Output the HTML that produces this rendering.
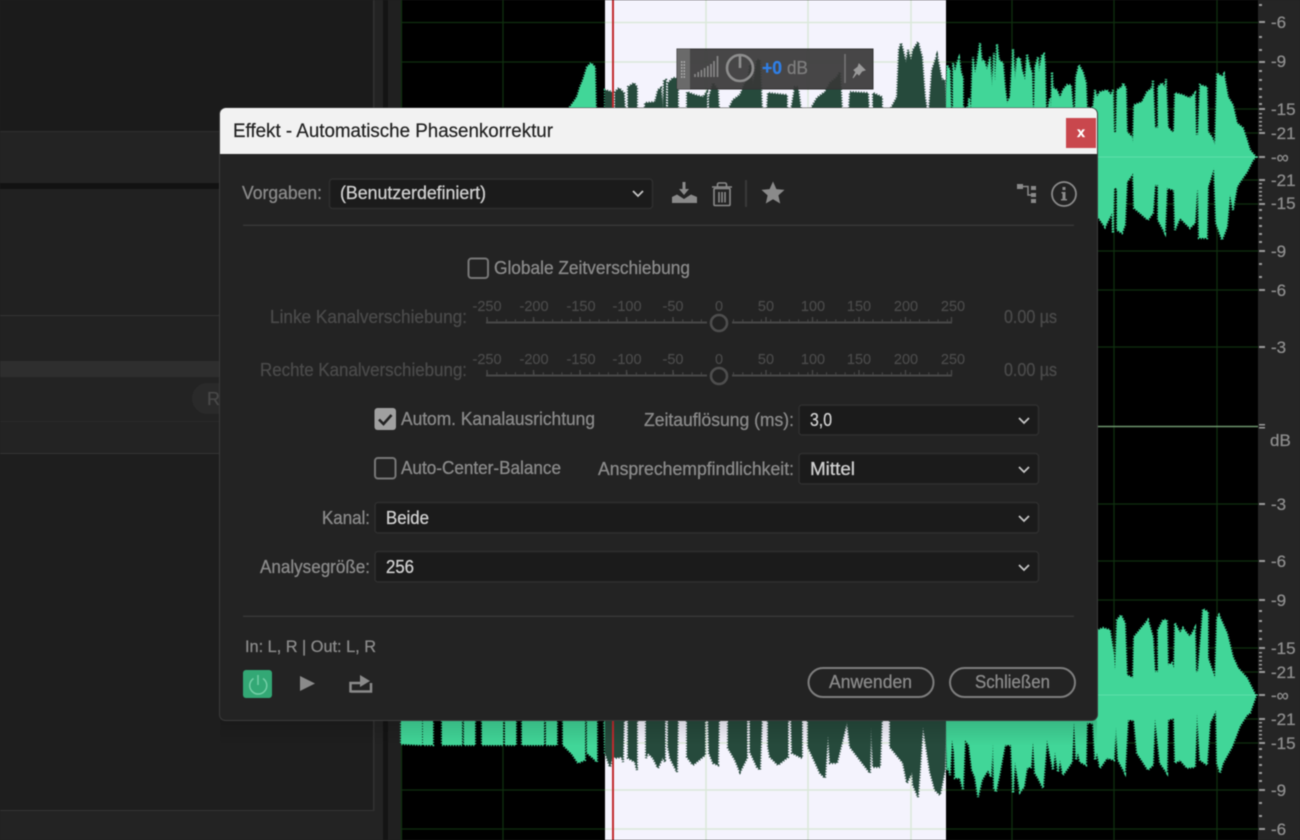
<!DOCTYPE html>
<html lang="de"><head><meta charset="utf-8"><title>Effekt - Automatische Phasenkorrektur</title>
<style>
html,body{margin:0;padding:0;background:#1f1f1f;width:1300px;height:840px;overflow:hidden}
svg{display:block;filter:blur(.4px)}
text{font-family:"Liberation Sans",sans-serif;font-size:18px;fill:#8a8a8a;stroke:#8a8a8a;stroke-width:.3}
.v{fill:#cfcfcf;stroke:#cfcfcf}.d{fill:#4a4a4a;stroke:#4a4a4a}.s{font-size:14.5px;fill:#4a4a4a;stroke:#4a4a4a;stroke-width:.2;text-anchor:middle}
.r{font-size:17px;fill:#8c8c8c;stroke:#8c8c8c}
.box{fill:#1b1b1b;stroke:#2f2f2f;stroke-width:1.5}
.ch{fill:none;stroke:#c4c4c4;stroke-width:1.8}
</style></head><body>
<svg xmlns="http://www.w3.org/2000/svg" width="1300" height="840" viewBox="0 0 1300 840">
<defs>
<clipPath id="sel"><rect x="605" y="0" width="341" height="840"/></clipPath>
<clipPath id="nosel"><path d="M0 0H605V840H0ZM946 0H1300V840H946Z"/></clipPath>
<linearGradient id="sh" x1="0" y1="0" x2="0" y2="1"><stop offset="0" stop-color="#000" stop-opacity=".14"/><stop offset="1" stop-color="#000" stop-opacity="0"/></linearGradient>
<path id="wave" d="M570 110L570 107L577 97L580 87L583 80L587 67L591 63L595 67L596 110L605 110L605 90L612 92L612 110L615 110L615 92L619 88L624 93L625 110L628 110L628 87L634 83L637 87L637 110L645 110L645 103L655 102L658 90L661 88L663 110L664 80L666 80L666 110L668 110L668 83L673 78L678 78L678 110L687 110L687 92L695 95L703 97L707 92L707 110L709 110L709 97L713 83L718 90L719 110L728 110L733 100L740 95L745 83L748 80L750 65L753 85L757 60L760 60L762 110L767 110L768 93L787 95L787 110L791 110L795 87L798 87L801 110L810 110L817 98L825 92L830 83L837 77L840 72L842 110L849 110L850 92L868 93L869 110L873 110L873 93L882 97L882 110L890 110L897 97L899 50L901 43L903 50L906 63L908 50L911 60L913 50L918 42L922 57L925 97L927 110L929 110L932 70L937 55L942 80L945 80L946 110L947 65L950 70L951 108L953 110L953 63L955 72L957 63L959 58L961 72L963 78L963 108L968 108L969 98L971 108L972 77L973 57L975 73L977 63L980 43L982 62L984 60L987 70L990 57L992 87L994 53L995 82L997 44L999 60L1003 63L1005 87L1007 103L1010 97L1013 49L1015 80L1017 58L1020 58L1022 70L1025 80L1027 54L1030 67L1032 73L1033 108L1034 108L1035 67L1038 57L1039 72L1042 55L1044 54L1045 63L1046 108L1048 108L1050 98L1051 108L1052 72L1053 88L1057 90L1060 98L1063 90L1067 85L1071 85L1073 108L1075 108L1076 77L1079 65L1083 72L1086 83L1087 108L1093 108L1095 90L1097 97L1100 92L1107 90L1111 95L1113 90L1114 133L1116 133L1117 90L1122 87L1123 83L1126 88L1127 132L1132 137L1133 143L1134 105L1142 102L1147 92L1152 88L1153 80L1155 128L1158 128L1158 87L1162 83L1165 88L1166 79L1168 127L1172 132L1174 132L1175 93L1183 95L1187 97L1190 98L1195 93L1196 135L1198 135L1200 85L1207 87L1208 132L1212 137L1215 145L1217 73L1222 77L1224 74L1228 97L1233 105L1237 123L1243 128L1247 140L1250 150L1256 157L1253 160L1247 172L1240 182L1237 187L1233 210L1230 195L1227 227L1222 240L1216 223L1214 168L1208 187L1207 238L1199 238L1198 190L1197 190L1195 223L1190 228L1180 218L1175 230L1174 190L1167 188L1165 233L1158 220L1158 185L1155 185L1153 213L1148 220L1140 213L1134 208L1133 173L1132 175L1127 182L1125 225L1122 233L1117 230L1117 188L1114 188L1113 233L1112 213L1105 227L1098 217L1090 205L570 157Z"/>
<path id="wave2" d="M401 690L1093 640L1098 630L1103 628L1110 630L1114 655L1115 670L1117 620L1121 615L1125 623L1127 675L1133 678L1134 637L1148 620L1153 637L1155 672L1158 672L1158 630L1163 620L1167 620L1168 665L1172 663L1174 668L1175 623L1180 633L1183 628L1190 637L1195 628L1196 672L1198 672L1203 609L1208 612L1208 658L1215 678L1217 618L1219 615L1227 633L1233 657L1238 668L1247 678L1256 696L1250 713L1247 715L1240 726L1232 747L1223 763L1220 773L1217 763L1216 710L1210 723L1207 765L1200 760L1197 713L1195 767L1187 768L1180 760L1175 763L1174 718L1168 720L1167 773L1160 763L1155 718L1153 765L1148 770L1137 753L1134 720L1128 720L1125 773L1118 760L1116 727L1114 760L1107 758L1100 768L1097 753L1095 760L1093 723L1087 723L1086 765L1080 762L1078 752L1076 760L1074 722L1072 762L1068 768L1063 775L1060 760L1058 772L1055 752L1053 770L1047 740L1043 788L1038 778L1035 773L1033 742L1031 767L1027 768L1024 787L1020 792L1015 762L1013 793L1011 745L1005 745L1000 772L996 792L994 788L993 743L991 777L988 770L982 780L978 797L975 777L972 770L969 745L965 740L963 790L960 778L955 778L954 752L952 740L950 775L948 767L947 770L946 720L945 770L940 795L935 790L930 772L923 727L920 770L918 797L913 785L912 772L907 783L903 763L890 747L890 716L882 716L880 767L873 767L871 727L870 773L850 747L847 722L837 763L830 763L828 735L825 778L820 773L808 747L808 716L802 716L802 758L792 753L791 716L788 716L788 757L778 765L770 757L768 747L768 716L762 716L760 770L757 767L750 752L750 716L747 716L747 758L740 772L735 760L728 748L728 716L719 716L718 765L713 763L709 753L708 716L705 716L705 755L693 765L687 757L687 716L678 716L677 772L675 768L670 758L668 747L668 716L665 716L665 762L663 757L658 768L653 758L648 753L646 758L646 716L637 716L637 770L635 762L628 758L628 716L624 716L623 762L622 757L615 758L613 755L610 767L605 753L604 716L597 716L597 762L593 758L587 753L587 716L585 716L585 760L578 763L572 754L563 745L563 716L557 716L557 745L546 745L546 716L544 716L544 745L522 745L522 716L516 716L516 745L505 745L505 716L503 716L503 745L482 745L482 716L475 716L475 745L464 745L464 716L462 716L462 745L442 745L442 716L433 716L433 745L423 745L423 716L422 716L422 745L401 744Z"/>
</defs>

<!-- left panel -->
<rect width="1300" height="840" fill="#1f1f1f"/>
<rect x="0" y="0" width="373" height="131" fill="#1b1b1b"/>
<rect x="0" y="131" width="373" height="1.5" fill="#2e2e2e"/>
<rect x="0" y="132" width="373" height="51" fill="#232323"/>
<rect x="0" y="183" width="373" height="6" fill="#121212"/>
<rect x="0" y="189" width="373" height="126" fill="#212121"/>
<rect x="0" y="315" width="373" height="1.5" fill="#333"/>
<rect x="0" y="316" width="373" height="45" fill="#222"/>
<rect x="0" y="361" width="373" height="16" fill="#2e2e2e"/>
<rect x="0" y="377" width="373" height="44" fill="#232323"/>
<rect x="0" y="421" width="373" height="1.5" fill="#2a2a2a"/>
<rect x="0" y="422" width="373" height="31" fill="#232323"/>
<rect x="0" y="453" width="373" height="1.5" fill="#333"/>
<rect x="0" y="454" width="373" height="356" fill="#1e1e1e"/>
<rect x="0" y="810" width="373" height="1.5" fill="#333"/>
<rect x="373" y="0" width="1.5" height="811" fill="#323232"/>
<rect x="0" y="811" width="383" height="29" fill="#232323"/>
<rect x="374.500" y="0" width="9" height="811" fill="#232323"/>
<rect x="383" y="0" width="5" height="840" fill="#141414"/>
<rect x="388" y="0" width="13" height="840" fill="#202020"/>
<rect x="192" y="383" width="60" height="31" rx="15.500" fill="#2a2a2a"/>
<text x="207" y="405" style="fill:#484848;stroke:#484848">R</text>

<!-- waveform background -->
<rect x="401" y="0" width="857" height="840" fill="#000"/>
<rect x="605" y="0" width="341" height="840" fill="#f4f3fd"/>
<g stroke="#0f2f0f" stroke-width="1.300">
<path d="M401.500 0V840M503 0V840M1012 0V840M1114 0V840M1217 0V840"/>
<path d="M401 22.500H605M946 22.500H1258M401 62H605M946 62H1258M946 109H1258M946 133H1258M946 180H1258M946 204H1258M946 251H1258M946 290H1258M946 347H1258M946 504H1258M946 561H1258M946 600H1258M946 648H1258M946 672H1258M946 719H1258M946 743H1258M401 790H605M946 790H1258M401 829H605M946 829H1258"/>
</g>
<g stroke="#dbe9da" stroke-width="1.500">
<path d="M706 0V840M808 0V840M911 0V840"/>
<path d="M605 22.500H946M605 62H946M605 743H946M605 790H946M605 829H946"/>
</g>

<!-- waves -->
<g clip-path="url(#nosel)">
<use href="#wave" fill="#41d698" stroke="#41d698" stroke-width="2.400" stroke-dasharray="1 1.700"/>
<use href="#wave2" fill="#41d698" stroke="#41d698" stroke-width="2.400" stroke-dasharray="1 1.700"/>
</g>
<g clip-path="url(#sel)">
<use href="#wave" fill="#264a3c" stroke="#264a3c" stroke-width="2.400" stroke-dasharray="1 1.700"/>
<use href="#wave2" fill="#264a3c" stroke="#264a3c" stroke-width="2.400" stroke-dasharray="1 1.700"/>
</g>
<path d="M946 157H1258M946 695H1258" stroke="#5fe0ab" stroke-width="1"/>
<path d="M1097 426.500H1258" stroke="#6d946d" stroke-width="1.600"/>
<rect x="612" y="0" width="2" height="840" fill="#c12a2e"/>
<rect x="220" y="720" width="877" height="26" fill="url(#sh)"/>

<!-- ruler -->
<rect x="1258" y="0" width="42" height="840" fill="#252525"/>
<g fill="#9a9a9a">
<path d="M1259 21h6v2h-6zM1259 61h6v2h-6zM1259 108h6v2h-6zM1259 132h6v2h-6zM1259 156h6v2h-6zM1259 179h6v2h-6zM1259 203h6v2h-6zM1259 250h6v2h-6zM1259 289h6v2h-6zM1259 346h6v2h-6zM1259 424h6v1.500h-6zM1259 427h6v1.500h-6zM1259 503h6v2h-6zM1259 560h6v2h-6zM1259 599h6v2h-6zM1259 647h6v2h-6zM1259 671h6v2h-6zM1259 694h6v2h-6zM1259 718h6v2h-6zM1259 742h6v2h-6zM1259 789h6v2h-6zM1259 828h6v2h-6z"/>
<path d="M1259 4h3v2h-3zM1259 36h3v2h-3zM1259 49h3v2h-3zM1259 70h3v2h-3zM1259 79h3v2h-3zM1259 88h3v2h-3zM1259 96h3v2h-3zM1259 103h3v2h-3zM1259 113h3v1.500h-3zM1259 117h3v1.500h-3zM1259 121h3v1.500h-3zM1259 125h3v1.500h-3zM1259 129h3v1.500h-3zM1259 183h3v1.500h-3zM1259 187h3v1.500h-3zM1259 191h3v1.500h-3zM1259 195h3v1.500h-3zM1259 199h3v1.500h-3zM1259 209h3v2h-3zM1259 217h3v2h-3zM1259 225h3v2h-3zM1259 233h3v2h-3zM1259 241h3v2h-3zM1259 263h3v2h-3zM1259 276h3v2h-3zM1259 610h3v2h-3zM1259 620h3v2h-3zM1259 630h3v2h-3zM1259 638h3v2h-3zM1259 652h3v1.500h-3zM1259 656h3v1.500h-3zM1259 660h3v1.500h-3zM1259 664h3v1.500h-3zM1259 668h3v1.500h-3zM1259 722h3v1.500h-3zM1259 726h3v1.500h-3zM1259 730h3v1.500h-3zM1259 734h3v1.500h-3zM1259 738h3v1.500h-3zM1259 748h3v2h-3zM1259 756h3v2h-3zM1259 764h3v2h-3zM1259 772h3v2h-3zM1259 780h3v2h-3zM1259 802h3v2h-3zM1259 815h3v2h-3z"/>
</g>
<g>
<text class="r" x="1271" y="28">-6</text><text class="r" x="1271" y="67">-9</text><text class="r" x="1271" y="115">-15</text><text class="r" x="1271" y="139">-21</text><text class="r" x="1271" y="163">-∞</text><text class="r" x="1271" y="186">-21</text><text class="r" x="1271" y="209">-15</text><text class="r" x="1271" y="257">-9</text><text class="r" x="1271" y="296">-6</text><text class="r" x="1271" y="353">-3</text><text class="r" x="1270" y="446">dB</text><text class="r" x="1271" y="510">-3</text><text class="r" x="1271" y="567">-6</text><text class="r" x="1271" y="606">-9</text><text class="r" x="1271" y="654">-15</text><text class="r" x="1271" y="678">-21</text><text class="r" x="1271" y="701">-∞</text><text class="r" x="1271" y="725">-21</text><text class="r" x="1271" y="749">-15</text><text class="r" x="1271" y="796">-9</text><text class="r" x="1271" y="835">-6</text>
</g>

<!-- floating toolbar -->
<rect x="677" y="49" width="196" height="40" fill="#373737" fill-opacity=".92" stroke="#333"/>
<rect x="677" y="49" width="13" height="40" fill="#6a6a6a"/>
<path d="M681 62h5M681 65h5M681 68h5M681 71h5M681 74h5M681 77h5" stroke="#b5b5b5" stroke-width="1.500" stroke-dasharray="1.500 1"/>
<path d="M695 77v-3M698.200 77v-5M701.400 77v-7M704.600 77v-9M707.800 77v-11M711 77v-13M714 77v-16M717.500 77v-21" stroke="#8a8a8a" stroke-width="1.600"/>
<circle cx="740" cy="68" r="13" fill="none" stroke="#8d8d8d" stroke-width="2.600"/>
<path d="M740 55v13" stroke="#8d8d8d" stroke-width="2.600"/>
<text x="762" y="74" textLength="20" lengthAdjust="spacingAndGlyphs" style="fill:#2f7fe6;stroke:#2f7fe6;font-weight:bold;font-size:18px">+0</text>
<text x="787" y="74" textLength="21" lengthAdjust="spacingAndGlyphs" style="fill:#7d7d7d;stroke:#7d7d7d;font-size:18px">dB</text>
<path d="M845 54v29" stroke="#777" stroke-width="1.500"/>
<path d="M859 64l6 6-3 1-3 4-2-2-4 5 3-6-2-2 4-3z" fill="#9a9a9a" stroke="#9a9a9a" stroke-width="1"/>

<!-- dialog -->
<rect x="219.500" y="108" width="878" height="612.500" rx="6" fill="#232323" stroke="#3b3b3b" stroke-width="1"/>
<path d="M220 154V114a6 6 0 0 1 6-6H1091a6 6 0 0 1 6 6V154Z" fill="#f2f2f2"/>
<text x="233" y="137" textLength="320" lengthAdjust="spacingAndGlyphs" style="fill:#222;stroke:#222;stroke-width:.2;font-size:19px">Effekt - Automatische Phasenkorrektur</text>
<rect x="1066" y="118" width="30" height="30" fill="#c9474d"/>
<text x="1081" y="137" text-anchor="middle" style="fill:#fff;stroke:#fff;font-weight:bold;font-size:14px">x</text>

<text x="242" y="199" textLength="80" lengthAdjust="spacingAndGlyphs">Vorgaben:</text>
<rect class="box" x="329.500" y="179" width="323" height="29.500" rx="3"/>
<text class="v" x="340" y="199" textLength="146" lengthAdjust="spacingAndGlyphs">(Benutzerdefiniert)</text>
<path class="ch" d="M633 191l5 5 5-5"/>

<!-- preset icons -->
<path d="M682.500 182h3v7h3.500l-5 6-5-6h3.500z" fill="#8a8a8a"/>
<path d="M672 203V197L677 194.500L684 199L691 194.500L697 197V203Z" fill="#8a8a8a"/>
<g fill="none" stroke="#8a8a8a" stroke-width="1.600">
<rect x="714" y="188.500" width="16" height="17" rx="1"/>
<path d="M712 187h20M717.500 187v-2.500a1.500 1.500 0 0 1 1.500-1.500h6a1.500 1.500 0 0 1 1.500 1.500v2.500M719 192v10.500M722 192v10.500M725 192v10.500"/>
</g>
<path d="M746 180v27" stroke="#383838" stroke-width="2"/>
<path d="M773 181.500l3.400 7.600 8.100.8-6.100 5.500 1.800 8.100-7.200-4.200-7.200 4.200 1.800-8.100-6.100-5.500 8.100-.8z" fill="#8a8a8a"/>
<path d="M1017 184h6v5h-6zM1031 186h5v4h-5zM1031 193h5v4h-5zM1031 199h5v4h-5z" fill="#8a8a8a"/>
<path d="M1023 186.500H1028V195H1031" fill="none" stroke="#8a8a8a" stroke-width="1.500"/>
<circle cx="1064" cy="194" r="12" fill="none" stroke="#8a8a8a" stroke-width="1.800"/>
<path d="M1062.500 187h3v3h-3zM1061.500 192h4v7h1.500v1.500h-6V199h1.500v-5.500h-1z" fill="#8a8a8a"/>

<rect x="243" y="224.500" width="831" height="1.500" fill="#363636"/>

<!-- global -->
<rect x="468.500" y="258.500" width="19.500" height="19.500" rx="3" fill="none" stroke="#777" stroke-width="2"/>
<text x="494" y="274" textLength="196" lengthAdjust="spacingAndGlyphs">Globale Zeitverschiebung</text>

<text class="d" x="270" y="323" textLength="197" lengthAdjust="spacingAndGlyphs">Linke Kanalverschiebung:</text>
<text class="d" x="260" y="376" textLength="207" lengthAdjust="spacingAndGlyphs">Rechte Kanalverschiebung:</text>
<text class="d" x="1004" y="323" textLength="53" lengthAdjust="spacingAndGlyphs">0.00 µs</text>
<text class="d" x="1004" y="376" textLength="53" lengthAdjust="spacingAndGlyphs">0.00 µs</text>

<g>
<text class="s" x="487" y="311">-250</text><text class="s" x="534" y="311">-200</text><text class="s" x="581" y="311">-150</text><text class="s" x="627" y="311">-100</text><text class="s" x="673" y="311">-50</text><text class="s" x="719" y="311">0</text><text class="s" x="766" y="311">50</text><text class="s" x="813" y="311">100</text><text class="s" x="859" y="311">150</text><text class="s" x="906" y="311">200</text><text class="s" x="953" y="311">250</text>
<text class="s" x="487" y="364">-250</text><text class="s" x="534" y="364">-200</text><text class="s" x="581" y="364">-150</text><text class="s" x="627" y="364">-100</text><text class="s" x="673" y="364">-50</text><text class="s" x="719" y="364">0</text><text class="s" x="766" y="364">50</text><text class="s" x="813" y="364">100</text><text class="s" x="859" y="364">150</text><text class="s" x="906" y="364">200</text><text class="s" x="953" y="364">250</text>
</g>
<g fill="none" stroke="#484848">
<path d="M486 322.500H707M732 322.500H952M486 375.500H707M732 375.500H952" stroke-width="2"/>
<path d="M487 322V317M533.500 322V317M580 322V317M626.500 322V317M673 322V317M766 322V317M812.500 322V317M859 322V317M905.500 322V317M951.500 322V317M487 375V370M533.500 375V370M580 375V370M626.500 375V370M673 375V370M766 375V370M812.500 375V370M859 375V370M905.500 375V370M951.500 375V370" stroke-width="1.300"/>
<path d="M487 320.500H706M733 320.500H952M487 373.500H706M733 373.500H952" stroke-width="2.500" stroke-dasharray="1 8.300"/>
<circle cx="719" cy="323" r="8" stroke-width="2.600" stroke="#4e4e4e"/>
<circle cx="719" cy="376" r="8" stroke-width="2.600" stroke="#4e4e4e"/>
</g>

<!-- options -->
<rect x="374.500" y="408" width="21.500" height="22" rx="3" fill="#a0a0a0"/>
<path d="M379 419.500l4.500 4.500 8-9" fill="none" stroke="#222" stroke-width="2.600"/>
<text x="401" y="425" textLength="194" lengthAdjust="spacingAndGlyphs">Autom. Kanalausrichtung</text>
<text x="644" y="426" textLength="150" lengthAdjust="spacingAndGlyphs">Zeitauflösung (ms):</text>
<rect class="box" x="799" y="405" width="239.500" height="30" rx="3"/>
<text class="v" x="810" y="426" textLength="22" lengthAdjust="spacingAndGlyphs">3,0</text>
<path class="ch" d="M1019 418l5 5 5-5"/>

<rect x="375" y="458" width="20.500" height="20.500" rx="3" fill="none" stroke="#777" stroke-width="2"/>
<text x="401" y="474" textLength="160" lengthAdjust="spacingAndGlyphs">Auto-Center-Balance</text>
<text x="598" y="475" textLength="196" lengthAdjust="spacingAndGlyphs">Ansprechempfindlichkeit:</text>
<rect class="box" x="799" y="453.500" width="239.500" height="30.500" rx="3"/>
<text class="v" x="810" y="475" textLength="45" lengthAdjust="spacingAndGlyphs">Mittel</text>
<path class="ch" d="M1019 467l5 5 5-5"/>

<text x="322" y="524" textLength="48" lengthAdjust="spacingAndGlyphs">Kanal:</text>
<rect class="box" x="375" y="502.500" width="663.500" height="30.500" rx="3"/>
<text class="v" x="386" y="524" textLength="43" lengthAdjust="spacingAndGlyphs">Beide</text>
<path class="ch" d="M1019 516l5 5 5-5"/>

<text x="260" y="573" textLength="110" lengthAdjust="spacingAndGlyphs">Analysegröße:</text>
<rect class="box" x="375" y="551.500" width="663.500" height="30.500" rx="3"/>
<text class="v" x="386" y="573" textLength="28" lengthAdjust="spacingAndGlyphs">256</text>
<path class="ch" d="M1019 565l5 5 5-5"/>

<rect x="243" y="615.500" width="831" height="1.500" fill="#363636"/>
<text x="245" y="652" textLength="131" lengthAdjust="spacingAndGlyphs" style="font-size:17px">In: L, R | Out: L, R</text>

<!-- bottom icons -->
<rect x="243" y="670" width="29" height="28" rx="3" fill="#33a875"/>
<path d="M253.500 678.500a8.500 8.500 0 1 0 9.500 0" fill="none" stroke="#74cfa7" stroke-width="1.500"/>
<path d="M258 675v10" stroke="#74cfa7" stroke-width="1.500"/>
<path d="M300 676l15 7.500-15 7.500z" fill="#8a8a8a"/>
<path d="M350.500 692.500V683H360M371 683V691.500H350.500" fill="none" stroke="#8a8a8a" stroke-width="2.500"/>
<path d="M360 675l10 6-10 6z" fill="#8a8a8a"/>

<rect x="808.500" y="668" width="125" height="29" rx="14.500" fill="none" stroke="#7e7e7e" stroke-width="2"/>
<text x="829" y="688" textLength="83" lengthAdjust="spacingAndGlyphs">Anwenden</text>
<rect x="950" y="668" width="125" height="29" rx="14.500" fill="none" stroke="#7e7e7e" stroke-width="2"/>
<text x="975" y="688" textLength="75" lengthAdjust="spacingAndGlyphs">Schließen</text>
</svg>
</body></html>
